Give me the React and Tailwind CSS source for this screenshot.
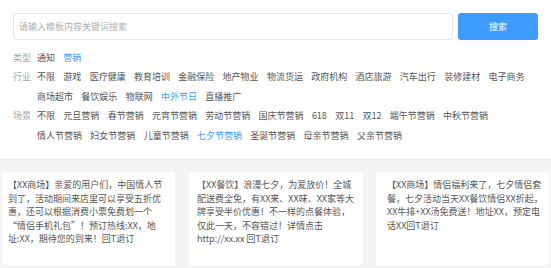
const font = { fontFamily: '"Noto Sans CJK SC", "Noto Sans", sans-serif' };

const filters = [
  { label: '类型', items: ['通知', '营销'], active: '营销' },
  {
    label: '行业',
    items: ['不限', '游戏', '医疗健康', '教育培训', '金融保险', '地产物业', '物流货运', '政府机构', '酒店旅游', '汽车出行', '装修建材', '电子商务', '商场超市', '餐饮娱乐', '物联网', '中外节日', '直播推广'],
    active: '中外节日',
  },
  {
    label: '场景',
    items: ['不限', '元旦营销', '春节营销', '元宵节营销', '劳动节营销', '国庆节营销', '618', '双11', '双12', '端午节营销', '中秋节营销', '情人节营销', '妇女节营销', '儿童节营销', '七夕节营销', '圣诞节营销', '母亲节营销', '父亲节营销'],
    active: '七夕节营销',
  },
];

const cards = [
  {
    pad: 'pl-[6px]',
    lines: ['【XX商场】亲爱的用户们，中国情人节', '到了，活动期间来店里可以享受五折优', '惠，还可以根据消费小票免费划一个', '“情侣手机礼包”！预订热线:XX，地', '址:XX，期待您的到来！回T退订'],
  },
  {
    pad: 'pl-[8px]',
    lines: ['【XX餐饮】浪漫七夕，为爱放价！全城', '配送费全免，有XX来、XX味、XX家等大', '牌享受半价优惠！不一样的点餐体验，', '仅此一天，不容错过！详情点击', 'http://xx.xx 回T退订'],
  },
  {
    pad: 'pl-[11px]',
    lines: ['【XX商场】情侣福利来了，七夕情侣套', '餐，七夕活动当天XX餐饮情侣XX折起，', 'XX牛排+XX汤免费送！地址XX，预定电', '话XX回T退订'],
  },
];

export default function App() {
  return (
    <div className="w-[551px] h-[268px] overflow-hidden bg-white" style={font}>
      <div className="px-[13px] pt-[13px] h-[160px] border-b border-[#ececec]">
        <div className="flex gap-[5px]">
          <div className="w-[440px] h-[27px] border border-[#e3e3e3] rounded-[3px] flex items-center pl-[5px] text-[9px] text-[#b0b0b0]">
            请输入模板内容关键词搜索
          </div>
          <button className="w-[80px] h-[27px] rounded-[3px] bg-[#3d9cfd] text-white text-[9px]">搜索</button>
        </div>
        <div className="mt-[7.5px]">
          {filters.map((f) => (
            <div key={f.label} className="flex text-[9px] leading-[19.5px]">
              <div className="w-[24px] shrink-0 text-[#a8a8a8]">{f.label}</div>
              <div className="flex flex-wrap gap-x-[8.3px]">
                {f.items.map((it) => (
                  <span key={it} className={it === f.active ? 'text-[#3d9cfd]' : 'text-[#555]'}>
                    {it}
                  </span>
                ))}
              </div>
            </div>
          ))}
        </div>
      </div>
      <div className="bg-[#f5f5f5] h-[108px] pt-[12px] pl-[2px] flex gap-[14px]">
        {cards.map((c, i) => (
          <div key={i} className={`w-[173px] h-[93px] shrink-0 bg-white rounded-[2px] pt-[6px] ${c.pad} text-[9px] leading-[13.5px] text-[#555]`}>
            {c.lines.map((l, j) => (
              <div key={j} className="whitespace-nowrap">{l}</div>
            ))}
          </div>
        ))}
      </div>
    </div>
  );
}
